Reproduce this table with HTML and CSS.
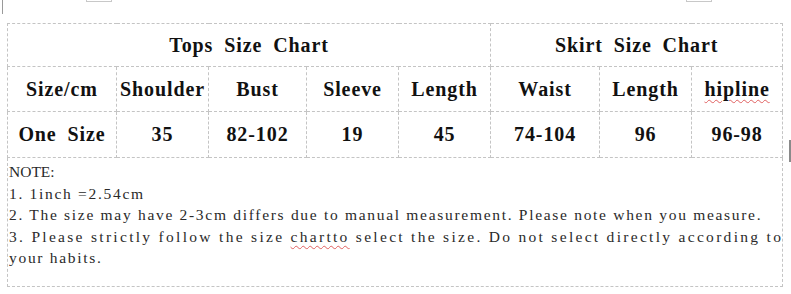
FILE: index.html
```html
<!DOCTYPE html>
<html>
<head>
<meta charset="utf-8">
<link rel="stylesheet" href="styles.css">
</head>
<body>
<div class="marks">
  <span class="mark-left"></span>
  <span class="mark-box mark-box-a"></span>
  <span class="mark-box mark-box-b"></span>
  <span class="mark-right"></span>
</div>
<div class="sheet">
  <table class="chart">
    <colgroup>
      <col class="c109"><col class="c92"><col class="c98"><col class="c92"><col class="c92"><col class="c109"><col class="c92"><col class="c91">
    </colgroup>
    <tr class="row-title">
      <td colspan="5">Tops Size Chart</td>
      <td colspan="3">Skirt Size Chart</td>
    </tr>
    <tr class="row-head">
      <td>Size/cm</td><td>Shoulder</td><td>Bust</td><td>Sleeve</td><td>Length</td><td>Waist</td><td>Length</td><td><span class="spell">hipline</span></td>
    </tr>
    <tr class="row-data">
      <td>One Size</td><td>35</td><td>82-102</td><td>19</td><td>45</td><td>74-104</td><td>96</td><td>96-98</td>
    </tr>
  </table>
  <div class="note">
    <p class="note-head">NOTE:</p>
    <p>1. 1inch =2.54cm</p>
    <p>2. The size may have 2-3cm differs due to manual measurement. Please note when you measure.</p>
    <p><span class="wide">3. Please strictly follow the size <span class="spell">chartto</span> select the size. Do not select directly according to</span><br>your habits.</p>
  </div>
</div>
</body>
</html>
```
FILE: styles.css
```css
html, body {
  margin: 0;
  padding: 0;
  background: #ffffff;
}
body {
  width: 791px;
  height: 294px;
  overflow: hidden;
  position: relative;
}
.marks .mark-left {
  position: absolute;
  left: 2px;
  top: 0;
  width: 1px;
  height: 14px;
  background: #9a9a9a;
}
.marks .mark-box {
  position: absolute;
  top: -1px;
  height: 2px;
  border: 1px solid #c8c8c8;
  border-top: none;
}
.marks .mark-box-a { left: 86px; width: 24px; }
.marks .mark-box-b { left: 686px; width: 24px; }
.marks .mark-right {
  position: absolute;
  left: 789px;
  top: 140px;
  width: 2px;
  height: 22px;
  background: #8a8a8a;
}
.sheet {
  padding: 23px 0 0 7px;
  width: 776px;
}
.chart {
  border-collapse: collapse;
  table-layout: fixed;
  width: 776px;
  font-family: "Liberation Serif", "DejaVu Serif", serif;
  font-weight: bold;
  font-size: 20px;
  letter-spacing: 0.9px;
  word-spacing: 5px;
  color: #111;
}
.c109 { width: 109px; }
.c92 { width: 92px; }
.c98 { width: 98px; }
.c91 { width: 91px; }
.chart td {
  border: 1px dashed #c4c4c4;
  text-align: center;
  padding: 0;
  white-space: nowrap;
  overflow: visible;
}
.row-title td { height: 42px; }
.row-head td { height: 44px; }
.row-data td { height: 45px; }
.spell {
  text-decoration: underline wavy #e06060;
  text-decoration-thickness: 1px;
  text-underline-offset: 3px;
}
.note {
  border: 1px dashed #c4c4c4;
  border-top: none;
  height: 129px;
  box-sizing: border-box;
  padding: 3px 0 0 1px;
  font-family: "Liberation Serif", "DejaVu Serif", serif;
  font-size: 15.5px;
  letter-spacing: 1.7px;
  line-height: 21.5px;
  color: #2a2a2a;
  white-space: nowrap;
}
.note p {
  margin: 0;
}
.note .note-head {
  letter-spacing: 0;
}
.note .wide {
  letter-spacing: 2.3px;
}
```
